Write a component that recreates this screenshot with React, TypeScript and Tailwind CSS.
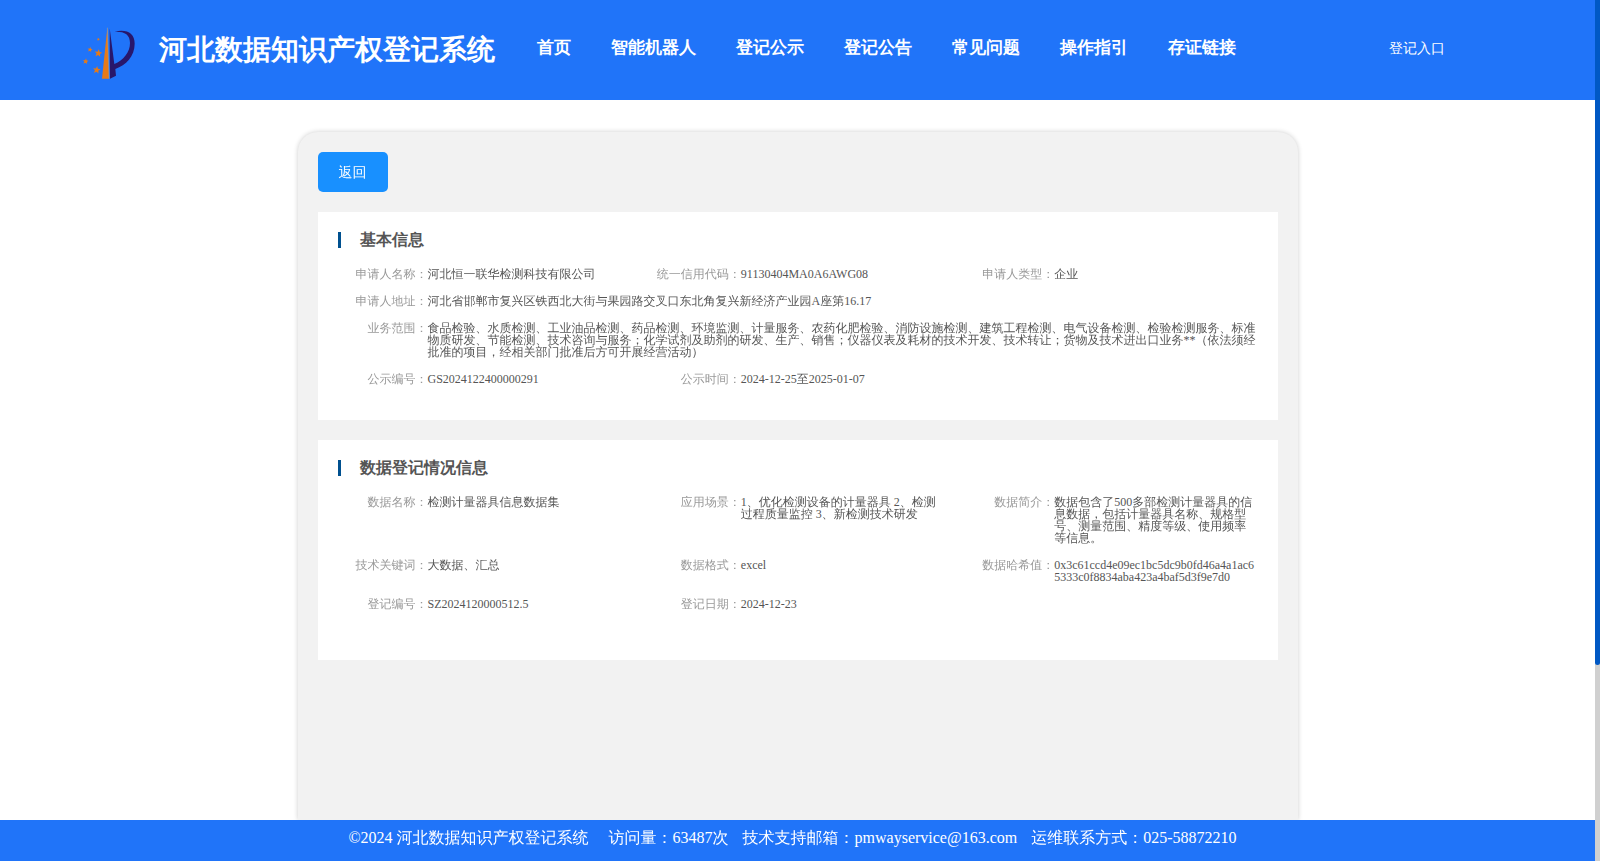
import { clsx } from 'clsx'

type Field = { label: string; value: string; wide?: boolean }

const NAV = ['首页', '智能机器人', '登记公示', '登记公告', '常见问题', '操作指引', '存证链接']

const BASIC: Field[] = [
  { label: '申请人名称', value: '河北恒一联华检测科技有限公司' },
  { label: '统一信用代码', value: '91130404MA0A6AWG08' },
  { label: '申请人类型', value: '企业' },
  {
    label: '申请人地址',
    value: '河北省邯郸市复兴区铁西北大街与果园路交叉口东北角复兴新经济产业园A座第16.17',
    wide: true
  },
  {
    label: '业务范围',
    value:
      '食品检验、水质检测、工业油品检测、药品检测、环境监测、计量服务、农药化肥检验、消防设施检测、建筑工程检测、电气设备检测、检验检测服务、标准物质研发、节能检测、技术咨询与服务；化学试剂及助剂的研发、生产、销售；仪器仪表及耗材的技术开发、技术转让；货物及技术进出口业务**（依法须经批准的项目，经相关部门批准后方可开展经营活动）',
    wide: true
  },
  { label: '公示编号', value: 'GS2024122400000291' },
  { label: '公示时间', value: '2024-12-25至2025-01-07' }
]

const REGISTRATION: Field[] = [
  { label: '数据名称', value: '检测计量器具信息数据集' },
  { label: '应用场景', value: '1、优化检测设备的计量器具 2、检测过程质量监控 3、新检测技术研发' },
  {
    label: '数据简介',
    value:
      '数据包含了500多部检测计量器具的信息数据，包括计量器具名称、规格型号、测量范围、精度等级、使用频率等信息。'
  },
  { label: '技术关键词', value: '大数据、汇总' },
  { label: '数据格式', value: 'excel' },
  {
    label: '数据哈希值',
    value: '0x3c61ccd4e09ec1bc5dc9b0fd46a4a1ac65333c0f8834aba423a4baf5d3f9e7d0'
  },
  { label: '登记编号', value: 'SZ2024120000512.5' },
  { label: '登记日期', value: '2024-12-23' }
]

export default function App() {
  return (
    <div className="flex h-screen bg-white font-['Liberation_Serif','WenQuanYi_Zen_Hei','Noto_Sans_CJK_SC',serif]">
      <div className="flex min-w-0 flex-1 flex-col">
        <Header />
        <main className="min-h-0 flex-1 overflow-hidden pt-8">
          <div className="mx-auto min-h-full max-w-[1000px] rounded-t-[20px] bg-[#f2f2f2] p-5 shadow-[0_0_5px_rgba(0,0,0,0.2)]">
            <button className="h-10 w-[70px] rounded-[5px] bg-[#1890ff] pt-px text-sm text-white">
              返回
            </button>
            <Section title="基本信息" fields={BASIC} />
            <Section title="数据登记情况信息" fields={REGISTRATION} className="pb-[35px]" />
          </div>
        </main>
        <footer className="flex h-[41px] shrink-0 justify-center bg-[#2074f9] pt-[6px] pr-[10px] text-base text-white">
          <span className="mr-5">©2024 河北数据知识产权登记系统</span>
          <span className="mr-[14px]">访问量：63487次</span>
          <span className="mr-[14px]">技术支持邮箱：pmwayservice@163.com</span>
          <span>运维联系方式：025-58872210</span>
        </footer>
      </div>
      {/* 滚动条 */}
      <div className="w-[5px] shrink-0 bg-[#d0d0d0]">
        <div className="h-[77.2%] rounded-b-sm bg-[#0058c4]" />
      </div>
    </div>
  )
}

function Header() {
  return (
    <header className="flex h-[100px] shrink-0 items-center bg-[#2074f9] pl-[70px] font-['Liberation_Serif',serif] text-white">
      <Logo />
      <h1 className="ml-[9px] text-[28px] font-bold whitespace-nowrap">河北数据知识产权登记系统</h1>
      <nav className="ml-[42px] flex gap-10 pb-1 text-[17px] font-bold whitespace-nowrap">
        {NAV.map((item) => (
          <a key={item} href="#">
            {item}
          </a>
        ))}
      </nav>
      <a href="#" className="mr-[150px] ml-auto pb-[2px] text-sm whitespace-nowrap">
        登记入口
      </a>
    </header>
  )
}

function Section({
  title,
  fields,
  className
}: {
  title: string
  fields: Field[]
  className?: string
}) {
  return (
    <section className={clsx('mt-5 bg-white p-5', className)}>
      <h2 className="border-l-3 border-[#00508f] pl-[19px] font-['Liberation_Serif',serif] text-base leading-4 font-bold text-[#555555]">
        {title}
      </h2>
      <dl className="mt-5 -mr-5 grid grid-cols-3 text-xs leading-3">
        {fields.map((f) => (
          <div key={f.label} className={clsx('mb-[15px] flex', f.wide && 'col-span-3')}>
            <dt className="w-[90px] shrink-0 text-right text-[#999999]">{f.label}：</dt>
            <dd className="min-w-0 flex-1 pr-5 break-words text-[#555555]">{f.value}</dd>
          </div>
        ))}
      </dl>
    </section>
  )
}

function Logo() {
  return (
    <svg viewBox="0 0 240 210" className="h-[70px] w-20 shrink-0" aria-hidden="true">
      <path d="M112 38 L117 191 L96 191 Z" fill="#e67a18" />
      <path d="M119 40 L133 147 C160 136 180 112 180 84 C180 58 164 49 134 50 C170 42 194 54 194 86 C194 124 168 150 136 162 L138 182 L120 191 Z" fill="#28176b" />
      <path d="M112 38 L117 191" stroke="#b5a58c" strokeWidth="1.5" />
      <g fill="#e67a18">
        <Star x={85} y={115} r={12} />
        <Star x={80} y={165} r={12} />
        <Star x={60} y={104} r={8} />
        <Star x={47} y={139} r={9} />
        <Star x={85} y={73} r={5} />
      </g>
    </svg>
  )
}

function Star({ x, y, r }: { x: number; y: number; r: number }) {
  return (
    <path
      transform={`translate(${x} ${y}) scale(${r}) rotate(8)`}
      d="M0 -1 L.26 -.35 L.95 -.31 L.42 .13 L.59 .81 L0 .44 L-.59 .81 L-.42 .13 L-.95 -.31 L-.26 -.35 Z"
    />
  )
}
